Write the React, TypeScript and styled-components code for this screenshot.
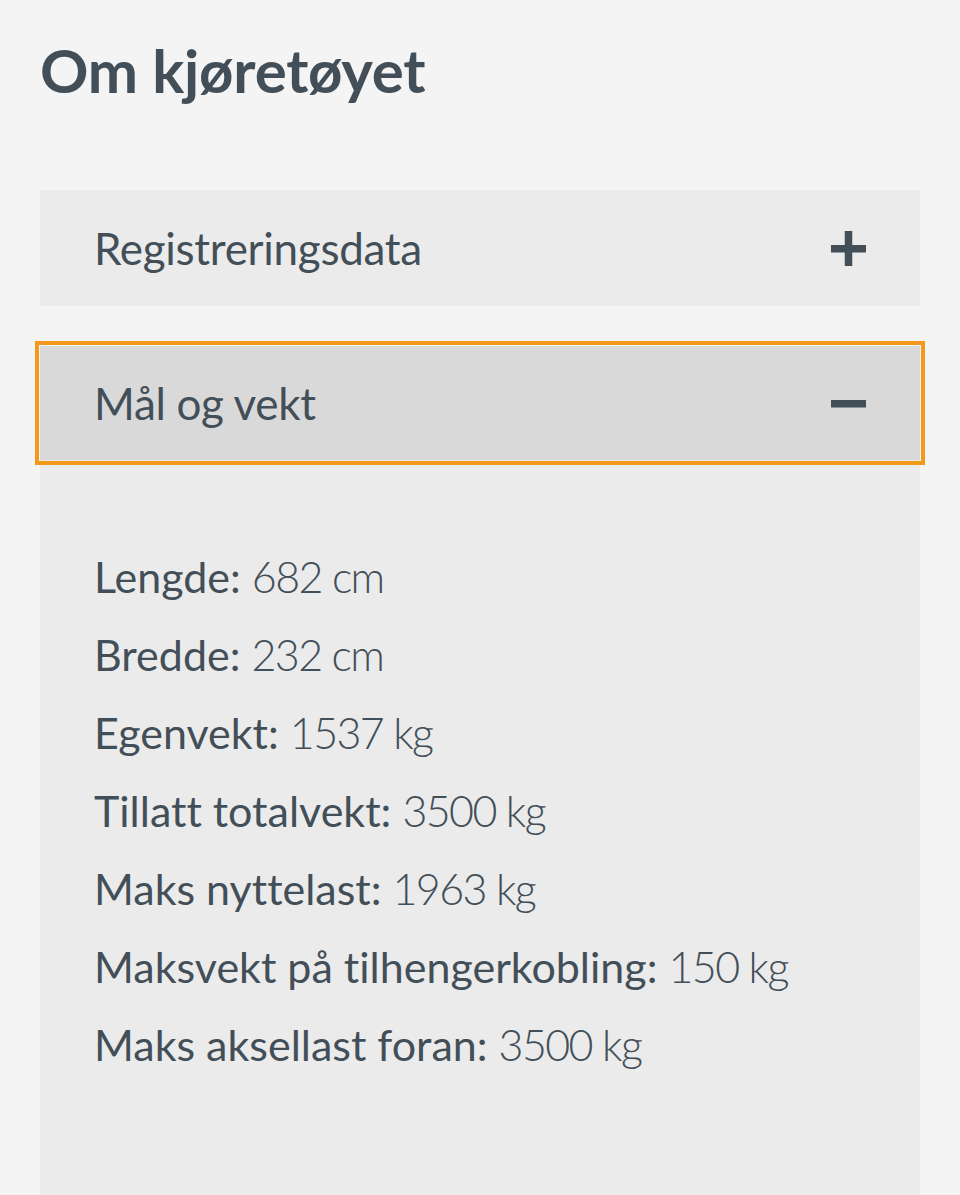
import React, { useState } from "react";
import styled, { createGlobalStyle } from "styled-components";

const GlobalStyle = createGlobalStyle`
  html, body {
    margin: 0;
    padding: 0;
    background: #f4f4f4;
  }
  body {
    font-family: Lato, "Open Sans", sans-serif;
    font-variant-ligatures: none;
    color: #434f58;
  }
`;

const specs = [
  { label: "Lengde", value: "682 cm" },
  { label: "Bredde", value: "232 cm" },
  { label: "Egenvekt", value: "1537 kg" },
  { label: "Tillatt totalvekt", value: "3500 kg" },
  { label: "Maks nyttelast", value: "1963 kg" },
  { label: "Maksvekt på tilhengerkobling", value: "150 kg" },
  { label: "Maks aksellast foran", value: "3500 kg" },
];

const ToggleIcon = ({ open }: { open: boolean }) => (
  <svg width="35" height="35" viewBox="0 0 35 35">
    <rect x="0" y="14" width="35" height="7.5" fill="currentColor" />
    {!open && <rect x="13.75" y="0" width="7.5" height="35" fill="currentColor" />}
  </svg>
);

const App = () => {
  const [open, setOpen] = useState<string | null>("mal");

  const toggle = (key: string) => setOpen(open === key ? null : key);

  return (
    <Page>
      <GlobalStyle />
      <Title>Om kjøretøyet</Title>
      <List>
        <Item>
          <Header
            $focused={false}
            $open={open === "reg"}
            onClick={() => toggle("reg")}
          >
            <HeaderText>Registreringsdata</HeaderText>
            <ToggleIcon open={open === "reg"} />
          </Header>
        </Item>
        <Item>
          <Header
            $focused={true}
            $open={open === "mal"}
            onClick={() => toggle("mal")}
          >
            <HeaderText>Mål og vekt</HeaderText>
            <ToggleIcon open={open === "mal"} />
          </Header>
          {open === "mal" && (
            <Body>
              {specs.map((s) => (
                <Spec key={s.label}>
                  <Label>{s.label}:</Label> <Value>{s.value}</Value>
                </Spec>
              ))}
            </Body>
          )}
        </Item>
      </List>
    </Page>
  );
};
export default App;

const Page = styled.div`
  padding: 37px 40px 0;
  min-height: 1195px;
  box-sizing: border-box;
`;

const Title = styled.h1`
  margin: 0 0 87px;
  font-size: 60px;
  line-height: 66px;
  font-weight: 700;
  letter-spacing: -0.2px;
`;

const List = styled.div`
  display: flex;
  flex-direction: column;
  gap: 40px;
`;

const Item = styled.div`
  background: #ebebeb;
`;

const Header = styled.button<{ $focused: boolean; $open: boolean }>`
  display: flex;
  align-items: center;
  justify-content: space-between;
  width: 100%;
  height: ${(p) => (p.$focused ? "114px" : "116px")};
  padding: 0 54px;
  box-sizing: border-box;
  border: none;
  background: ${(p) => (p.$open ? "#d9d9d9" : "#ebebeb")};
  color: #434f58;
  font: inherit;
  cursor: pointer;
  text-align: left;
  outline: ${(p) => (p.$focused ? "4px solid #f39a1c" : "none")};
  outline-offset: 1px;
`;

const HeaderText = styled.span`
  font-size: 44px;
  font-weight: 400;
  letter-spacing: -0.3px;
`;

const Body = styled.div`
  padding: 78px 54px 120px;
  display: flex;
  flex-direction: column;
`;

const Spec = styled.div`
  font-size: 43px;
  line-height: 78px;
`;

const Label = styled.span`
  font-weight: 400;
`;

const Value = styled.span`
  font-weight: 300;
  letter-spacing: -1.6px;
`;
